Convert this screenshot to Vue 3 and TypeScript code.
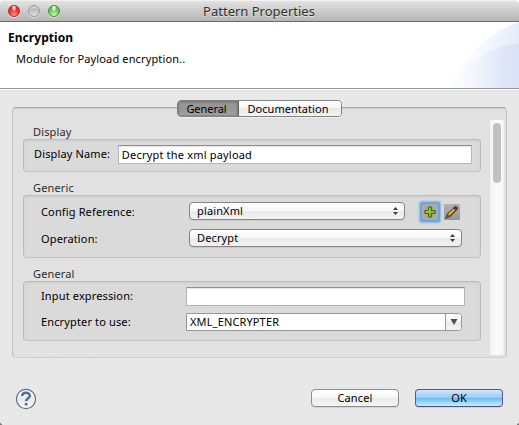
<script setup lang="ts">
import { ref } from 'vue'

const tabs = ['General', 'Documentation']
const activeTab = ref('General')
const displayName = ref('Decrypt the xml payload')
const inputExpression = ref('')
const encrypter = ref('XML_ENCRYPTER')
</script>

<template>
  <div class="window">
    <header class="titlebar">
      <div class="lights"><i class="light red" /><i class="light gray" /><i class="light green" /></div>
      <span class="title">Pattern Properties</span>
    </header>

    <section class="banner">
      <div class="banner-text">
        <h1>Encryption</h1>
        <p>Module for Payload encryption..</p>
      </div>
      <svg class="swoosh" width="79" height="66" viewBox="0 0 79 66">
        <defs>
          <linearGradient id="back" x1="0" x2="1">
            <stop offset="0" stop-color="#fff" />
            <stop offset=".4" stop-color="#f8faff" />
            <stop offset="1" stop-color="#edf1fc" />
          </linearGradient>
          <linearGradient id="mid" x1="0" x2="1">
            <stop offset="0" stop-color="#f9fbff" />
            <stop offset="1" stop-color="#e5ebf9" />
          </linearGradient>
          <linearGradient id="front" x1="0" x2="1">
            <stop offset="0" stop-color="#fff" />
            <stop offset=".35" stop-color="#f4f7fd" />
            <stop offset=".75" stop-color="#e0e7f8" />
            <stop offset="1" stop-color="#dae2f6" />
          </linearGradient>
        </defs>
        <path d="M7 66C22 38 46 10 79 0V66Z" fill="url(#back)" />
        <path d="M32 66C40 32 56 8 79 1V66Z" fill="url(#mid)" />
        <path d="M7 66C25 42 50 24 79 21V66Z" fill="url(#front)" />
      </svg>
    </section>

    <main class="content">
      <nav class="tabs">
        <button v-for="tab in tabs" :key="tab" :class="{ active: tab === activeTab }" @click="activeTab = tab">{{ tab }}</button>
      </nav>
      <div class="panel">
        <div class="form">
          <h2>Display</h2>
          <div class="group display">
            <label>Display Name:</label>
            <input v-model="displayName" class="field" />
          </div>

          <h2>Generic</h2>
          <div class="group generic">
            <div class="row">
              <label>Config Reference:</label>
              <div class="select short">
                <span>plainXml</span>
                <svg width="5" height="8" viewBox="0 0 5 8"><path d="M2.5 0 5 3H0ZM0 5H5L2.5 8Z" fill="#3d3d3d" /></svg>
              </div>
              <button class="tool focused">
                <svg width="16" height="16" viewBox="0 0 16 16">
                  <path d="M6.5 3H9.5V6.5H13V9.5H9.5V13H6.5V9.5H3V6.5H6.5Z" fill="#8cc019" stroke="#456b16" stroke-width="1.2" />
                  <path d="M7.5 4.5V7.5H4.5" fill="none" stroke="#b0db48" />
                </svg>
              </button>
              <button class="tool">
                <svg width="16" height="16" viewBox="0 0 16 16">
                  <path d="M2.2 13.8 3.5 10.3 10.7 3.1 12.9 5.3 5.7 12.5Z" fill="#edaa2f" stroke="#3d3429" stroke-width="1.2" />
                  <path d="M4.6 10 10.3 4.3" stroke="#ffd16b" stroke-width=".8" />
                  <path d="M2.2 13.8 3.5 10.3 5.7 12.5Z" fill="#8c8274" stroke="#3d3429" stroke-width=".7" />
                  <path d="m9.9 3.9 2.2 2.2" stroke="#484643" stroke-width="1.6" />
                  <path d="m11 2.8 1-.9 2.1 2.1-.9 1Z" fill="#b02c2e" stroke="#6b2727" stroke-width=".7" />
                </svg>
              </button>
            </div>
            <div class="row">
              <label>Operation:</label>
              <div class="select">
                <span>Decrypt</span>
                <svg width="5" height="8" viewBox="0 0 5 8"><path d="M2.5 0 5 3H0ZM0 5H5L2.5 8Z" fill="#3d3d3d" /></svg>
              </div>
            </div>
          </div>

          <h2>General</h2>
          <div class="group general">
            <div class="row">
              <label>Input expression:</label>
              <input v-model="inputExpression" class="field" />
            </div>
            <div class="row">
              <label>Encrypter to use:</label>
              <div class="combo">
                <input v-model="encrypter" />
                <button><svg width="8" height="6" viewBox="0 0 8 6"><path d="M.5 0H7.5L4 6Z" fill="#505050" /></svg></button>
              </div>
            </div>
          </div>
          <svg class="cutoff" width="64" height="3" viewBox="0 0 64 3">
            <path d="M0 2 3 .5H8L11 2 18 .7 28 1.5V2.5H0ZM50 2.2 54 .7H60L63 2.2Z" fill="#e9e9e9" />
          </svg>
        </div>
        <div class="scrollbar"><div class="thumb" /></div>
      </div>
    </main>

    <footer class="actions">
      <svg class="help" width="22" height="22" viewBox="0 0 22 22">
        <defs>
          <linearGradient id="helpfill" x1="0" y1="0" x2="0" y2="1">
            <stop offset="0" stop-color="#fff" /><stop offset=".5" stop-color="#e9e9e9" /><stop offset="1" stop-color="#fff" />
          </linearGradient>
        </defs>
        <circle cx="11" cy="11" r="9.6" fill="url(#helpfill)" stroke="#576d90" stroke-width="1.1" />
        <path d="M7.2 8.1C7.2 3.7 14.8 3.7 14.8 7.8 14.8 10.4 11.1 10.3 11.1 13.3" fill="none" stroke="#576d90" stroke-width="2.5" />
        <rect x="9.7" y="14.9" width="2.8" height="2.6" rx=".6" fill="#576d90" />
      </svg>
      <button class="push">Cancel</button>
      <button class="push primary">OK</button>
    </footer>
    <i class="corner left" /><i class="corner right" />
  </div>
</template>

<style>
body { overflow: hidden; }
</style>

<style scoped>
* { box-sizing: border-box; }
button, input { font: inherit; letter-spacing: inherit; color: inherit; margin: 0; padding: 0; outline: none; }
svg { display: block; flex: none; }
.window {
  position: relative;
  display: flex;
  flex-direction: column;
  width: 519px;
  height: 425px;
  overflow: hidden;
  background: #e8e8e8;
  border-radius: 5px 5px 0 0;
  font: 11px/16px "Noto Sans", "Liberation Sans", sans-serif;
  letter-spacing: 0.14px;
  color: #000;
}
.titlebar {
  position: relative;
  display: flex;
  justify-content: center;
  height: 22px;
  border-top: 1px solid #f1f1f1;
  border-bottom: 1px solid #696969;
  background: linear-gradient(#e2e2e2, #b5b5b5);
}
.title { padding-right: 1px; font-size: 13px; line-height: 21px; letter-spacing: 0; color: #303030; text-shadow: 0 1px 0 #e5e5e5; }
.lights { position: absolute; left: 8px; top: 4px; display: flex; gap: 8px; }
.light { width: 12px; height: 12px; border-radius: 50%; border: 1px solid; box-shadow: 0 1px 0 #e1e1e1; }
.red { border-color: #a43433; background: radial-gradient(ellipse at 50% 15%, #ffd6d1 0 10%, transparent 38%), radial-gradient(circle at 50% 90%, #ff9a90, #ee3c3a 45%, #d5161c); }
.gray { border-color: #989898; background: linear-gradient(#d9d9d9, #bdbdbd 35%, #e0e0e0); }
.green { border-color: #4b8e40; background: radial-gradient(ellipse at 50% 15%, #e3ffdf 0 10%, transparent 38%), radial-gradient(circle at 50% 90%, #c9ffad, #7bcb65 45%, #4aa541); }

.banner { display: flex; justify-content: space-between; height: 67px; background: #fff; border-bottom: 1px solid #999; }
.banner-text { padding: 8px 0 0 8px; }
h1 { margin: 0; font-size: 12px; line-height: 16px; font-weight: 700; letter-spacing: 0.04px; }
p { margin: 5px 0 0 8px; }

.content { display: flex; flex-direction: column; align-items: center; padding-top: 10px; border-top: 1px solid #f8f8f8; height: 269px; }
.tabs { position: relative; z-index: 1; display: flex; height: 18px; width: 165px; border: 1px solid #818181; border-radius: 4px; overflow: hidden; box-shadow: 0 1px 0 #f0f0f0; }
.tabs button { border: 0; padding-right: 4px; line-height: 15px; letter-spacing: 0.05px; background: linear-gradient(#fff, #f5f5f5 50%, #e9e9e9 50%, #f4f4f4); flex: 1; }
.tabs button.active { flex: none; width: 61px; padding-right: 3px; border-right: 1px solid #686868; letter-spacing: -0.05px; background: linear-gradient(#808080, #989898 25%, #979797 60%, #a2a2a2); box-shadow: inset 1px 0 2px #777, inset -1px 0 2px #777; }
.panel {
  display: flex;
  justify-content: space-between;
  width: 495px;
  height: 251px;
  margin-top: -10px;
  padding: 12px 2px 2px 10px;
  border: 1px solid #c2c2c2;
  border-top-color: #a8a8a8;
  border-bottom-color: #d0d0d0;
  border-radius: 4px;
  background: #e1e1e1;
  box-shadow: inset 0 1px 1px #d0d0d0;
}
.form { width: 458px; height: 235px; overflow: hidden; }
h2 { margin: 0; padding: 4px 0 0 10px; height: 19px; font-size: 11px; line-height: 16px; font-weight: 400; color: #2c2c2c; }
.group { border: 1px solid #bdbdbd; border-bottom-color: #c5c5c5; border-radius: 4px; background: #dadada; box-shadow: inset 0 1px 2px #cdcdcd; }
.display { display: flex; height: 33px; padding: 5px 8px 0 10px; }
.display label { width: 84px; line-height: 18px; }
.display .field { width: 355px; padding-left: 3px; letter-spacing: 0.19px; }
.display + h2 { height: 23px; padding-top: 8px; }
.generic { height: 63px; padding: 6px 0 0 17px; }
.generic + h2 { height: 23px; padding-top: 8px; }
.general { height: 60px; padding: 5px 0 0 17px; }
.row { display: flex; height: 27px; }
.row label { width: 148px; line-height: 19px; }
.field { height: 19px; border: 1px solid #b5b5b5; border-top: 1px solid #8f8f8f; border-radius: 0; background: #fff; box-shadow: inset 0 1px 1px #e4e4e4; line-height: 17px; }
.select {
  display: flex;
  align-items: center;
  justify-content: space-between;
  width: 273px;
  height: 18px;
  padding: 0 6px 0 7px;
  border: 1px solid #858585;
  border-radius: 4px;
  background: linear-gradient(#fff, #f8f8f8 48%, #ebebeb 52%, #f1f1f1);
  box-shadow: 0 1px 0 #c9c9c9;
}
.select span { line-height: 16px; }
.short { width: 216px; }
.tool { width: 16px; height: 16px; margin-top: 2px; border: 0; background: linear-gradient(#b2b2b2, #969696); }
.tool + .tool { margin-left: 6px; }
.focused { margin-left: 17px; box-shadow: 0 0 0 2px #6aa7dc, 0 0 2px 3px #8cb9df; border-radius: 1px; background: #aaa; }
.general .row { height: 26px; }
.general label { width: 145px; line-height: 17px; }
.general .field { width: 279px; }
.combo { display: flex; width: 276px; height: 18px; border: 1px solid #989898; border-radius: 0 4px 4px 0; background: #fff; overflow: hidden; }
.combo input { width: 258px; border: 0; padding-left: 3px; background: none; }
.combo button { display: flex; align-items: center; justify-content: center; width: 16px; border: 0; border-left: 1px solid #989898; background: linear-gradient(#fff, #f4f4f4 50%, #e9e9e9 50%, #f4f4f4); }
.cutoff { margin: 11px 0 0 10px; }
.scrollbar { width: 14px; height: 235px; padding: 3px; background: linear-gradient(90deg, #f2f2f2, #fbfbfb 40%, #fafafa 80%, #f0f0f0); }
.thumb { width: 8px; height: 60px; border-radius: 4px; background: #c1c1c1; }

.actions { display: flex; align-items: flex-start; padding: 31px 16px 0 15px; }
.help { margin-right: auto; margin-top: -1px; }
.push { width: 88px; height: 18px; border: 1px solid #8c8c8c; border-radius: 4px; line-height: 16px; background: linear-gradient(#fff, #f6f6f6 48%, #eaeaea 52%, #f6f6f6); box-shadow: 0 1px 0 #d5d5d5; }
.primary { margin-left: 16px; border-color: #5550a5 #52549d #4c5181; background: linear-gradient(#d2e6fb, #9bcaf6 48%, #70b6f3 52%, #a9e2ff 85%, #bcf3ff); }
.corner { position: absolute; bottom: 0; width: 3px; height: 3px; }
.left { left: 0; background: radial-gradient(circle at 100% 0, transparent 2.5px, #777 3px); }
.right { right: 0; background: radial-gradient(circle at 0 0, transparent 2.5px, #777 3px); }
</style>
